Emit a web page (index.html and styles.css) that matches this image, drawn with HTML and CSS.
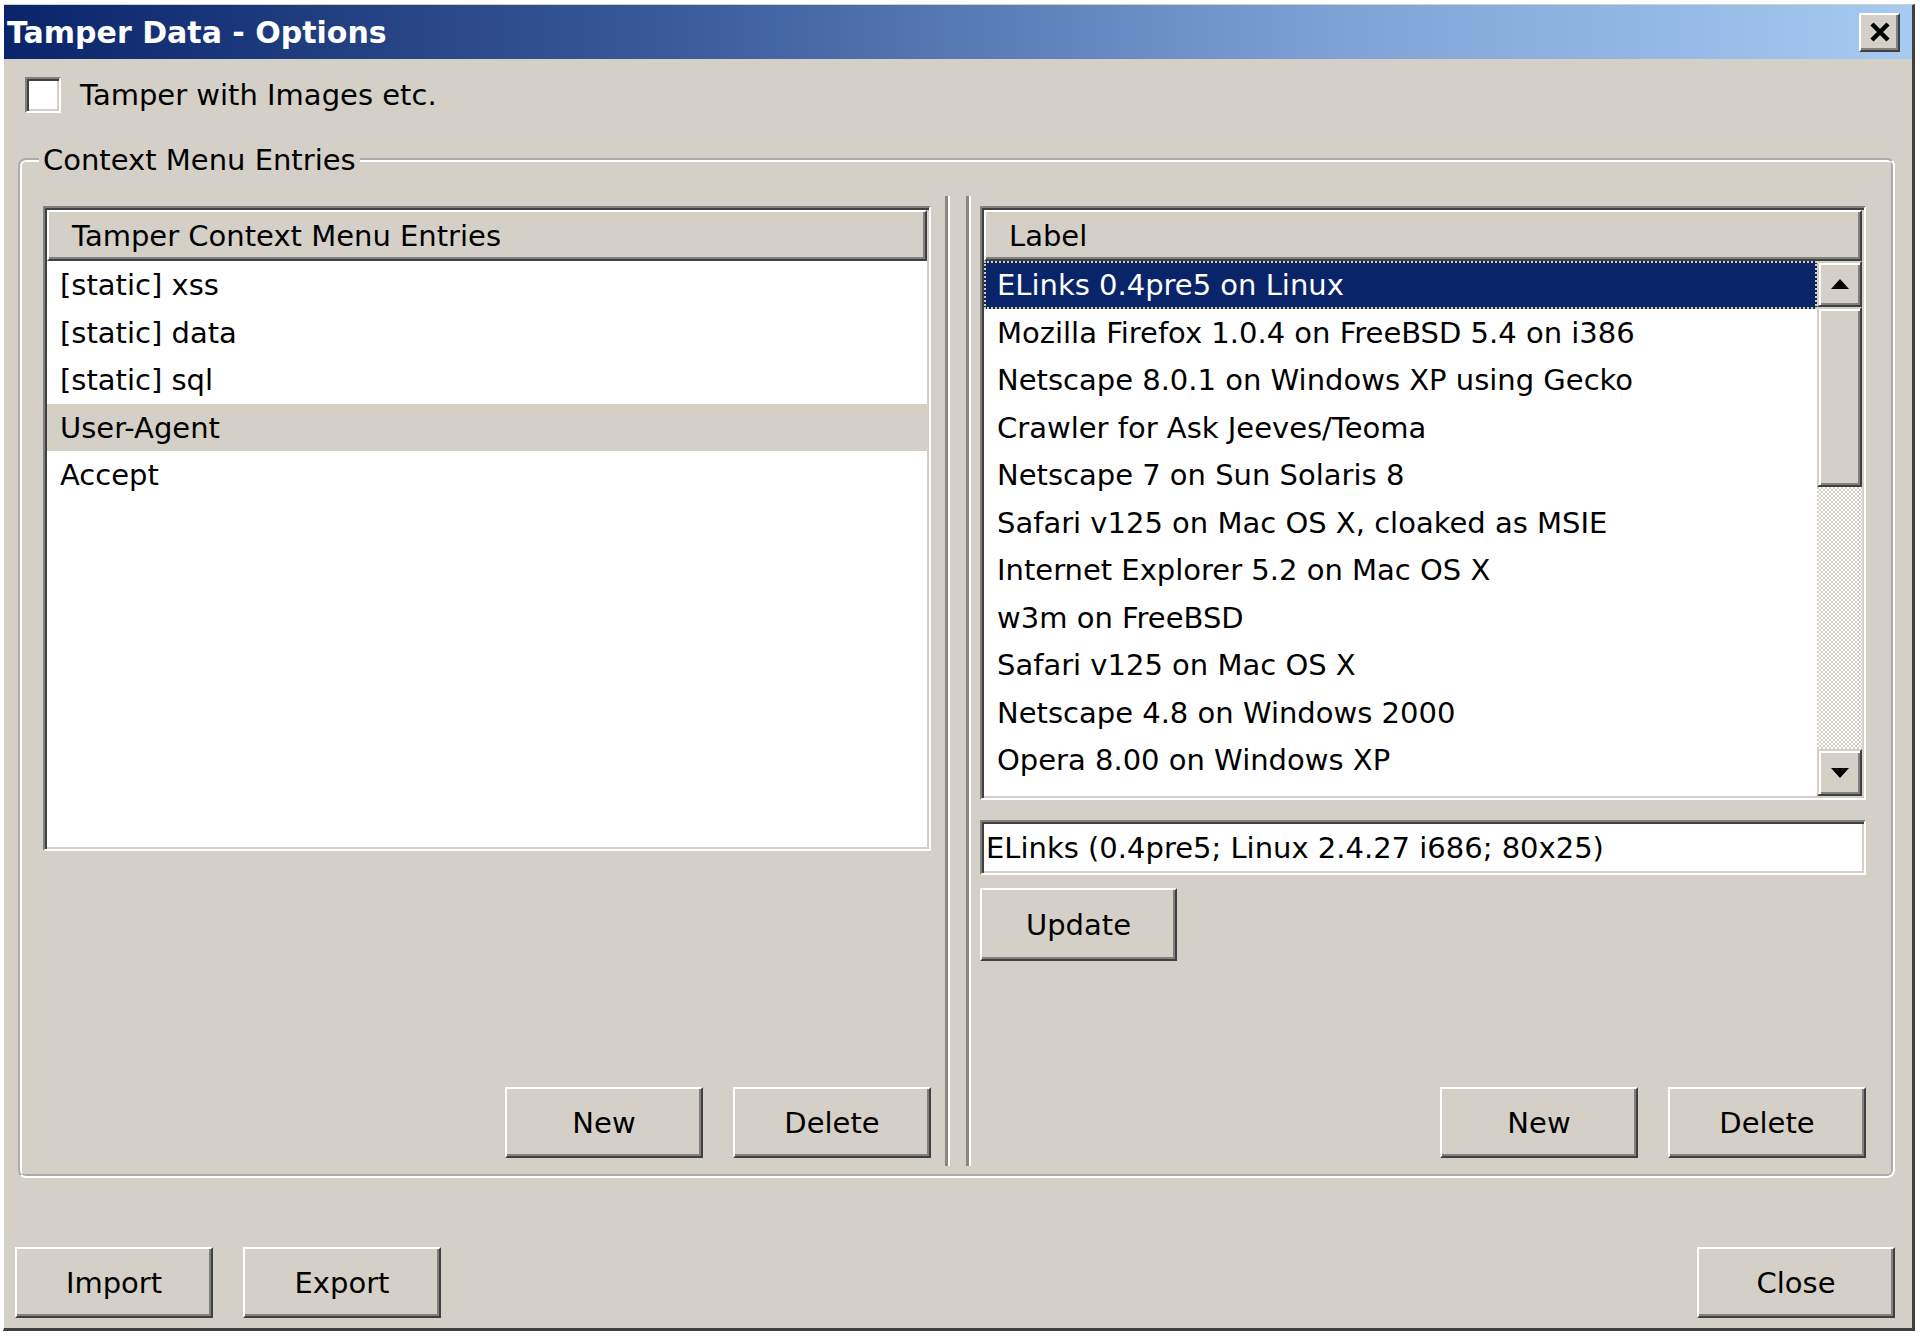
FILE: index.html
```html
<!DOCTYPE html>
<html>
<head lang="en">
    <meta charset="UTF-8">
    <title>Tamper Data - Options</title>
    <link rel="stylesheet" href="styles.css">
</head>
<body>
<div class="window">
    <div class="titlebar">
        <span class="title">Tamper Data - Options</span>
        <span class="close-btn">
            <svg width="22" height="20" viewBox="0 0 22 20"><path d="M3 2 L19 18 M19 2 L3 18" stroke="#000" stroke-width="4.5" fill="none"/></svg>
        </span>
    </div>
    <div class="body">
        <label class="check-row"><span class="checkbox"></span>Tamper with Images etc.</label>
        <fieldset class="group">
            <legend>Context Menu Entries</legend>
            <div class="pane left-pane">
                <div class="listbox entries">
                    <div class="list-head">Tamper Context Menu Entries</div>
                    <ul class="rows">
                        <li>[static] xss</li>
                        <li>[static] data</li>
                        <li>[static] sql</li>
                        <li class="current">User-Agent</li>
                        <li>Accept</li>
                    </ul>
                </div>
                <div class="btn-row">
                    <button class="btn">New</button>
                    <button class="btn">Delete</button>
                </div>
            </div>
            <div class="splitter"></div>
            <div class="pane right-pane">
                <div class="listbox labels">
                    <div class="list-head">Label</div>
                    <div class="list-body">
                        <ul class="rows">
                            <li class="selected">ELinks 0.4pre5 on Linux</li>
                            <li>Mozilla Firefox 1.0.4 on FreeBSD 5.4 on i386</li>
                            <li>Netscape 8.0.1 on Windows XP using Gecko</li>
                            <li>Crawler for Ask Jeeves/Teoma</li>
                            <li>Netscape 7 on Sun Solaris 8</li>
                            <li>Safari v125 on Mac OS X, cloaked as MSIE</li>
                            <li>Internet Explorer 5.2 on Mac OS X</li>
                            <li>w3m on FreeBSD</li>
                            <li>Safari v125 on Mac OS X</li>
                            <li>Netscape 4.8 on Windows 2000</li>
                            <li>Opera 8.00 on Windows XP</li>
                        </ul>
                        <div class="scrollbar">
                            <span class="sb-btn">
                                <svg width="18" height="10" viewBox="0 0 18 10"><path d="M9 0 L18 10 L0 10 Z" fill="#000"/></svg>
                            </span>
                            <span class="sb-thumb"></span>
                            <span class="sb-track"></span>
                            <span class="sb-btn down">
                                <svg width="18" height="10" viewBox="0 0 18 10"><path d="M0 0 L18 0 L9 10 Z" fill="#000"/></svg>
                            </span>
                        </div>
                    </div>
                </div>
                <input class="value" type="text" value="ELinks (0.4pre5; Linux 2.4.27 i686; 80x25)">
                <div class="update-row"><button class="btn update">Update</button></div>
                <div class="btn-row">
                    <button class="btn">New</button>
                    <button class="btn">Delete</button>
                </div>
            </div>
        </fieldset>
        <div class="footer">
            <button class="btn">Import</button>
            <button class="btn">Export</button>
            <span class="spacer"></span>
            <button class="btn">Close</button>
        </div>
    </div>
</div>
</body>
</html>
```

FILE: styles.css
```css
* {
    margin: 0;
    padding: 0;
    box-sizing: border-box;
}

body {
    background: #fff;
    font-family: "DejaVu Sans", "Liberation Sans", sans-serif;
    font-size: 29px;
    color: #000;
}

ul {
    list-style: none;
}

.window {
    width: 1912px;
    height: 1327px;
    margin: 4px 0 0 3px;
    background: #d4d0c8;
    border-top: 1px solid #d4d0c8;
    border-left: 1px solid #fff;
    border-right: 3px solid #404040;
    border-bottom: 3px solid #404040;
    display: flex;
    flex-direction: column;
}

/* title bar */
.titlebar {
    height: 54px;
    display: flex;
    align-items: center;
    padding-left: 3px;
    background: linear-gradient(to right, #0a246a 0%, #3a5a9a 35%, #7ea2d6 70%, #a6caf0 100%);
}

.title {
    flex: 1;
    color: #fff;
    font-weight: bold;
    font-size: 30px;
}

.close-btn {
    width: 41px;
    height: 39px;
    margin-right: 12px;
    display: flex;
    align-items: center;
    justify-content: center;
    background: #d4d0c8;
    border: 2px solid;
    border-color: #fff #404040 #404040 #fff;
    box-shadow: inset -2px -2px 0 #808080;
}

.body {
    flex: 1;
    display: flex;
    flex-direction: column;
    padding: 18px 17px 10px 14px;
}

/* checkbox */
.check-row {
    display: flex;
    align-items: center;
    height: 36px;
    margin-left: 7px;
}

.checkbox {
    width: 36px;
    height: 36px;
    margin-right: 19px;
    background: #fff;
    border: 2px solid;
    border-color: #808080 #fff #fff #808080;
    box-shadow: inset 2px 2px 0 #404040, inset -2px -2px 0 #d4d0c8;
}

/* group box */
.group {
    flex: 1;
    margin-top: 29px;
    display: flex;
    border: 4px groove #fff;
    border-radius: 8px;
    padding: 18px 25px 8px 21px;
    min-height: 0;
}

.group legend {
    line-height: 36px;
    margin-left: -4px;
    padding: 0 4px;
}

.pane {
    display: flex;
    flex-direction: column;
    padding: 10px 0 8px;
}

.left-pane {
    width: 888px;
}

.right-pane {
    flex: 1;
}

.splitter {
    width: 49px;
    display: flex;
    justify-content: center;
    padding-left: 2px;
}

.splitter::before {
    content: "";
    width: 18px;
    border-left: 3px solid #8a8780;
    border-right: 3px solid #8a8780;
    box-shadow: inset 2px 0 0 #fff, 2px 0 0 #fff;
}

/* list boxes */
.listbox {
    display: flex;
    flex-direction: column;
    background: #fff;
    border: 2px solid;
    border-color: #808080 #fff #fff #808080;
    box-shadow: inset 2px 2px 0 #404040, inset -2px -2px 0 #d4d0c8;
    padding: 2px;
    overflow: hidden;
}

.entries {
    height: 645px;
}

.labels {
    height: 594px;
}

.list-head {
    height: 51px;
    line-height: 48px;
    padding-left: 23px;
    background: #d4d0c8;
    border: 2px solid;
    border-color: #fff #404040 #404040 #fff;
    box-shadow: inset -2px -2px 0 #808080;
    flex: none;
}

.rows li {
    height: 47.5px;
    line-height: 49px;
    padding-left: 13px;
    white-space: nowrap;
}

.rows li.current {
    background: #d4d0c8;
}

.rows li.selected {
    background: #0a246a;
    color: #fff;
    outline: 2px dotted #d8d0a0;
    outline-offset: -2px;
}

.list-body {
    flex: 1;
    display: flex;
    min-height: 0;
}

.list-body .rows {
    flex: 1;
    overflow: hidden;
}

.scrollbar {
    width: 45px;
    display: flex;
    flex-direction: column;
}

.sb-btn {
    height: 46px;
    display: flex;
    align-items: center;
    justify-content: center;
    background: #d4d0c8;
    border: 2px solid;
    border-color: #d4d0c8 #404040 #404040 #d4d0c8;
    box-shadow: inset 2px 2px 0 #fff, inset -2px -2px 0 #808080;
}

.sb-btn.down {
    height: 47px;
}

.sb-thumb {
    height: 180px;
    background: #d4d0c8;
    border: 2px solid;
    border-color: #d4d0c8 #404040 #404040 #d4d0c8;
    box-shadow: inset 2px 2px 0 #fff, inset -2px -2px 0 #808080;
}

.sb-track {
    flex: 1;
    background: repeating-conic-gradient(#fff 0 25%, #d4d0c8 0 50%) 0 0 / 4px 4px;
}

/* text field */
.value {
    margin-top: 20px;
    height: 55px;
    padding-left: 4px;
    font: inherit;
    color: #000;
    background: #fff;
    border: 2px solid;
    border-color: #808080 #fff #fff #808080;
    box-shadow: inset 2px 2px 0 #404040, inset -2px -2px 0 #d4d0c8;
    outline: none;
}

.update-row {
    margin-top: 13px;
}

/* buttons */
.btn {
    width: 198px;
    height: 71px;
    font: inherit;
    color: #000;
    background: #d4d0c8;
    border: 2px solid;
    border-color: #fff #404040 #404040 #fff;
    box-shadow: inset -2px -2px 0 #808080;
}

.btn.update {
    width: 197px;
    height: 73px;
}

.btn-row {
    margin-top: auto;
    display: flex;
    justify-content: flex-end;
    gap: 30px;
}

.footer {
    margin: 69px 0 0 -3px;
    display: flex;
    gap: 30px;
}

.spacer {
    flex: 1;
}
```
